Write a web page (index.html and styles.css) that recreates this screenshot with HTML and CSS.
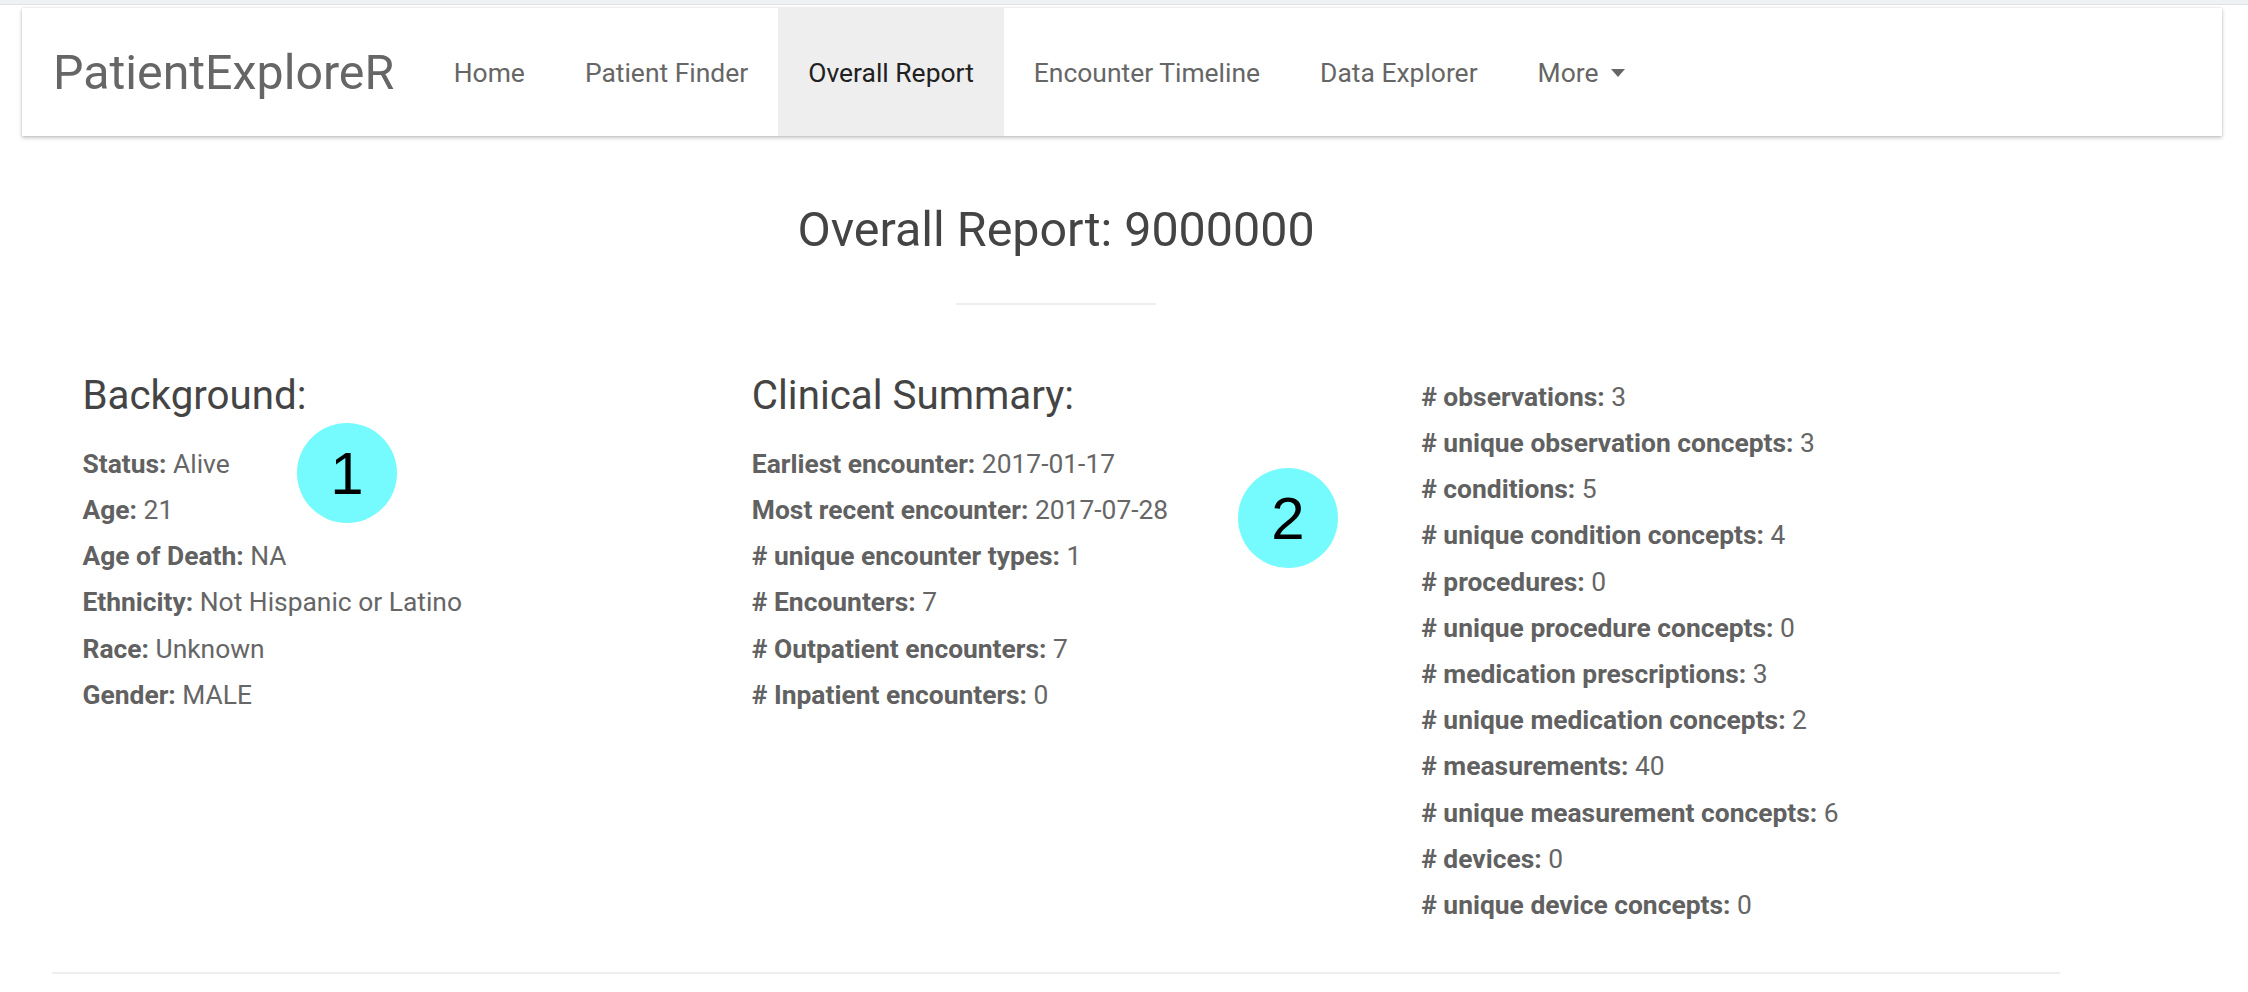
FILE: index.html
```html
<!DOCTYPE html>
<html lang="en">
<head>
<meta charset="utf-8">
<title>PatientExploreR - Overall Report</title>
<link rel="stylesheet" href="styles.css">
</head>
<body>
<div class="topstrip"></div>
<nav class="navbar">
  <a class="brand" href="#">PatientExploreR</a>
  <ul class="nav">
    <li><a href="#">Home</a></li>
    <li><a href="#">Patient Finder</a></li>
    <li class="active"><a href="#">Overall Report</a></li>
    <li><a href="#">Encounter Timeline</a></li>
    <li><a href="#">Data Explorer</a></li>
    <li><a href="#">More<span class="caret"></span></a></li>
  </ul>
</nav>
<main class="report">
  <h1 class="title">Overall Report: 9000000</h1>
  <hr class="title-rule">
  <div class="columns">
    <section class="col">
      <h3 class="col-head">Background:</h3>
      <ul class="facts">
        <li><b>Status:</b> Alive</li>
        <li><b>Age:</b> 21</li>
        <li><b>Age of Death:</b> NA</li>
        <li><b>Ethnicity:</b> Not Hispanic or Latino</li>
        <li><b>Race:</b> Unknown</li>
        <li><b>Gender:</b> MALE</li>
      </ul>
    </section>
    <section class="col">
      <h3 class="col-head">Clinical Summary:</h3>
      <ul class="facts">
        <li><b>Earliest encounter:</b> 2017-01-17</li>
        <li><b>Most recent encounter:</b> 2017-07-28</li>
        <li><b># unique encounter types:</b> 1</li>
        <li><b># Encounters:</b> 7</li>
        <li><b># Outpatient encounters:</b> 7</li>
        <li><b># Inpatient encounters:</b> 0</li>
      </ul>
    </section>
    <section class="col">
      <ul class="facts">
        <li><b># observations:</b> 3</li>
        <li><b># unique observation concepts:</b> 3</li>
        <li><b># conditions:</b> 5</li>
        <li><b># unique condition concepts:</b> 4</li>
        <li><b># procedures:</b> 0</li>
        <li><b># unique procedure concepts:</b> 0</li>
        <li><b># medication prescriptions:</b> 3</li>
        <li><b># unique medication concepts:</b> 2</li>
        <li><b># measurements:</b> 40</li>
        <li><b># unique measurement concepts:</b> 6</li>
        <li><b># devices:</b> 0</li>
        <li><b># unique device concepts:</b> 0</li>
      </ul>
    </section>
  </div>
  <hr class="bottom-rule">
</main>
<span class="marker marker-one">1</span>
<span class="marker marker-two">2</span>
</body>
</html>
```

FILE: styles.css
```css
html, body {
  margin: 0;
  padding: 0;
  background: #ffffff;
}

body {
  position: relative;
  font-family: Roboto, "Liberation Sans", sans-serif;
  color: #666666;
  min-height: 992px;
}

.topstrip {
  height: 4px;
  background: #eef2f3;
  border-bottom: 1px solid #dde3e6;
}

.navbar {
  display: flex;
  align-items: stretch;
  height: 128px;
  margin: 3px 26px 0 22px;
  background: #ffffff;
  box-shadow: 0 2px 4px rgba(0, 0, 0, 0.22), 0 0 2px rgba(0, 0, 0, 0.12);
}

.brand {
  display: flex;
  align-items: center;
  padding: 0 29.5px 0 31px;
  font-size: 48.3px;
  color: #666666;
  text-decoration: none;
}

.nav {
  display: flex;
  list-style: none;
  margin: 0;
  padding: 0;
}

.nav li {
  display: flex;
}

.nav a {
  display: flex;
  align-items: center;
  box-sizing: border-box;
  height: 100%;
  padding: 0 30px;
  font-size: 26.45px;
  color: #666666;
  text-decoration: none;
}

.nav .active a {
  background: #eeeeee;
  color: #212121;
}

.caret {
  display: inline-block;
  width: 0;
  height: 0;
  margin-left: 12px;
  margin-top: 2px;
  border-top: 8px solid #666666;
  border-left: 7px solid transparent;
  border-right: 7px solid transparent;
}

.report {
  width: 2008px;
  margin: 0 0 0 52px;
}

.title {
  margin: 68px 0 0;
  font-size: 48.4px;
  line-height: 52.8px;
  font-weight: 400;
  color: #444444;
  text-align: center;
}

.title-rule {
  width: 200px;
  height: 2px;
  margin: 46px auto 0;
  border: 0;
  background: #eeeeee;
}

.columns {
  display: grid;
  grid-template-columns: repeat(3, 1fr);
  margin-top: 69px;
}

.col {
  padding: 0 30.5px;
}

.col-head {
  margin: 0 0 24px;
  font-size: 40.3px;
  line-height: 43px;
  font-weight: 400;
  color: #444444;
}

.facts {
  list-style: none;
  margin: 0;
  padding: 0;
  font-size: 26.4px;
  line-height: 46.2px;
  color: #666666;
}

.facts b {
  font-weight: 700;
  color: #616161;
}

.bottom-rule {
  height: 2px;
  margin: 44px 0 0;
  border: 0;
  background: #eeeeee;
}

.marker {
  position: absolute;
  display: flex;
  align-items: center;
  justify-content: center;
  width: 100px;
  height: 100px;
  border-radius: 50%;
  background: #75fbfd;
  font-family: "Liberation Sans", Arial, sans-serif;
  font-size: 60px;
  color: #000000;
}

.marker-one {
  left: 297px;
  top: 423px;
}

.marker-two {
  left: 1238px;
  top: 468px;
}
```
